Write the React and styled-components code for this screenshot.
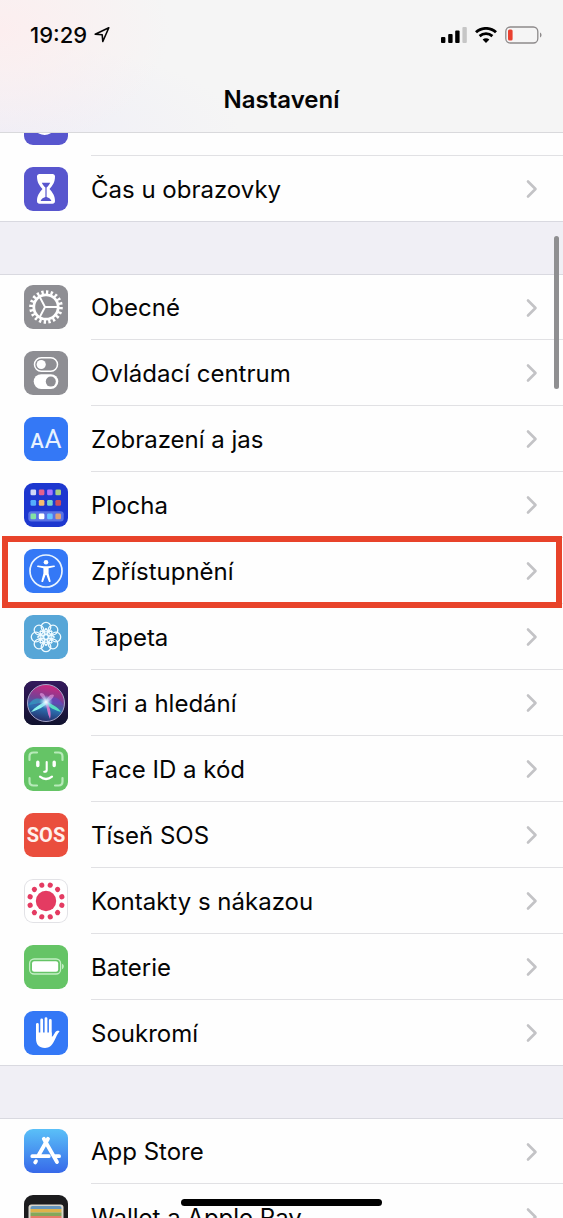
import React, { useLayoutEffect, useRef } from "react";
import styled, { createGlobalStyle } from "styled-components";

const GlobalStyle = createGlobalStyle`
  * {
    box-sizing: border-box;
  }
  body {
    margin: 0;
    background: #ffffff;
    color: #050505;
    font-family: Inter, Roboto, "Liberation Sans", sans-serif;
  }
`;

const Phone = styled.div`
  position: relative;
  display: flex;
  flex-direction: column;
  width: 100%;
  height: 100vh;
  overflow: hidden;
`;

const Header = styled.header`
  flex: none;
  padding-top: 20px;
  border-bottom: 1px solid #d9d9dc;
  background: radial-gradient(ellipse 170px 120px at 0 30px, #fceeef 0%, rgba(252, 238, 239, 0) 100%),
    radial-gradient(ellipse 240px 90px at 0 132px, #efeef7 0%, rgba(239, 238, 247, 0) 100%),
    #f5f5f5;
`;

const StatusBar = styled.div`
  display: flex;
  align-items: center;
  justify-content: space-between;
  height: 30px;
  padding: 0 21px 0 30px;
`;

const Clock = styled.div`
  display: flex;
  align-items: center;
  gap: 7px;
  font-size: 22px;
  font-weight: 500;
`;

const Signals = styled.div`
  display: flex;
  align-items: center;
  gap: 8px;
`;

const Title = styled.h1`
  margin: 34px 0 16px;
  font-size: 24px;
  line-height: 32px;
  font-weight: 600;
  text-align: center;
`;

const Scroller = styled.main`
  flex: 1;
  min-height: 0;
  overflow-y: auto;
  background: #f0eff5;
  scrollbar-width: none;
`;

const Group = styled.ul`
  margin: 0;
  padding: 0;
  list-style: none;
  background: #fefefe;

  & + & {
    margin-top: 52px;
  }
`;

const Item = styled.li`
  position: relative;
  height: 66px;

  &:first-child {
    border-top: 1px solid #d9d9e0;
  }
`;

const RowLink = styled.a`
  display: flex;
  align-items: center;
  gap: 23px;
  height: 100%;
  padding-left: 24px;
  color: inherit;
  text-decoration: none;
`;

const Tile = styled.svg`
  flex: none;
  width: 44px;
  height: 44px;
  margin-bottom: 1px;
  border-radius: 9px;
  background: ${(props) => props.$bg};
  box-shadow: ${(props) => (props.$outlined ? "inset 0 0 0 1px #e2e2e6" : "none")};
`;

const RowBody = styled.span`
  flex: 1;
  display: flex;
  align-items: center;
  justify-content: space-between;
  height: 100%;
  padding: 1px 25px 0 0;
  border-bottom: 1px solid #e1e1e4;

  ${Item}:last-child & {
    margin-left: -91px;
    padding-left: 91px;
    border-color: #d9d9e0;
  }
`;

const Label = styled.span`
  padding-top: 1px;
  font-size: 24px;
  line-height: 32px;
`;

const Highlight = styled.span`
  position: absolute;
  z-index: 1;
  top: -2px;
  bottom: -4px;
  left: 2px;
  right: 1px;
  border: 6px solid #e8432a;
  pointer-events: none;
`;

const ScrollThumb = styled.div`
  position: absolute;
  top: 236px;
  right: 4px;
  width: 5px;
  height: 153px;
  border-radius: 3px;
  background: #8f8f91;
`;

const HomeIndicator = styled.div`
  position: absolute;
  bottom: 12px;
  left: 50%;
  width: 201px;
  height: 7px;
  margin-left: -101px;
  border-radius: 4px;
  background: #000000;
`;

const Chevron = () => (
  <svg width="12" height="20" viewBox="0 0 12 20" fill="none" aria-hidden="true">
    <path d="M2 2.5 9.5 10 2 17.5" stroke="#c3c3c6" strokeWidth="2.6" strokeLinecap="round" strokeLinejoin="round" />
  </svg>
);

const LocationIcon = () => (
  <svg width="16" height="16" viewBox="0 0 16 16" fill="none" aria-hidden="true">
    <path d="M1.2 7.2 14.8 .8 8.8 14.5 8.2 7.8Z" stroke="#050505" strokeWidth="1.6" strokeLinejoin="round" />
  </svg>
);

const SignalIcon = () => (
  <svg width="26" height="16" viewBox="0 0 26 16" aria-hidden="true">
    <rect x="0" y="10" width="4.4" height="6" rx="1" />
    <rect x="7.2" y="7" width="4.4" height="9" rx="1" />
    <rect x="14.2" y="3.6" width="4.4" height="12.4" rx="1" />
    <rect x="21.4" y="0" width="4.4" height="16" rx="1" fill="#c6c6c6" />
  </svg>
);

const WifiIcon = () => (
  <svg width="22" height="16" viewBox="0 0 22 16" fill="none" aria-hidden="true">
    <path d="M1 5.3C6.6 .1 15.4 .1 21 5.3" stroke="#000" strokeWidth="2.9" />
    <path d="M4.6 9.1C8.3 5.8 13.7 5.8 17.4 9.1" stroke="#000" strokeWidth="2.8" />
    <path d="M7.6 12.4C9.6 10.7 12.4 10.7 14.4 12.4L11 16Z" fill="#000" />
  </svg>
);

const BatteryIcon = () => (
  <svg width="37" height="18" viewBox="0 0 37 18" fill="none" aria-hidden="true">
    <rect x="0.8" y="1" width="32" height="16" rx="4.5" stroke="#8d8a8b" strokeWidth="1.3" />
    <path d="M35 6.5c2 .8 2 4.2 0 5Z" fill="#8d8a8b" />
    <rect x="3" y="3.5" width="4.6" height="11" rx="1.5" fill="#e9402f" />
  </svg>
);

const Moon = () => <path d="M20 10a12 12 0 1 0 11 18 12 12 0 0 1-11-18Z" fill="#fff" />;

const Hourglass = () => (
  <g>
    <path
      d="M15.5 7h13c1.500 0 2.500 1 2.500 2.500 0 6-2.500 9-5.500 12.500 3 3.500 5.500 6.500 5.500 12 0 1.700-1 2.800-2.500 2.800h-13c-1.500 0-2.500-1.100-2.500-2.800 0-5.500 2.500-8.500 5.500-12C15.500 18.500 13 15.500 13 9.500 13 8 14 7 15.500 7Z"
      fill="#fff"
    />
    <path
      d="M17.800 15.800h8.400c-.8 2-2 3.200-3.600 4.800v9.400c2.500.8 4.200 2 4.800 4H16.600c.6-2 2.300-3.200 4.800-4v-9.400c-1.600-1.600-2.800-2.800-3.600-4.800Z"
      fill="#5856ce"
    />
  </g>
);

const Gear = () => (
  <g stroke="#fff" fill="none">
    <circle cx="22" cy="22" r="12.200" strokeWidth="2.800" />
    <circle cx="22" cy="22" r="14.900" strokeWidth="3.800" pathLength="40" strokeDasharray="1 1" />
    <path d="M21 22h14M21 22 15.500 11.500M21 22l-5.500 10.500" strokeWidth="1.900" />
  </g>
);

const Toggles = () => (
  <g>
    <rect x="10.500" y="6.800" width="23" height="13.400" rx="6.700" fill="none" stroke="#fff" strokeWidth="1.500" />
    <circle cx="17.200" cy="13.500" r="4.600" fill="#fff" />
    <rect x="9.700" y="23.200" width="24.600" height="14.800" rx="7.400" fill="#fff" />
    <circle cx="26.800" cy="30.600" r="5" fill="#8e8e93" />
  </g>
);

const LetterSizes = () => (
  <g fill="#e8f2ff" fontFamily="Roboto, sans-serif">
    <text x="6.500" y="31" fontSize="20" fontWeight="500">A</text>
    <text x="20.500" y="31" fontSize="26">A</text>
  </g>
);

const appColors = [
  ["#d0d7f7", "#e0608e", "#a874ff", "#a8cd84"],
  ["#54aefc", "#f5bd70", "#78d4cd", "#cd4f5d"],
  ["#83e2a4", "#ffffff", "#65c3ff", "#dfa077"],
];

const HomeScreen = () => (
  <g>
    <rect x="4.300" y="28.200" width="35.400" height="10.400" rx="3" fill="#5871e5" />
    {appColors.map((row, r) =>
      row.map((color, c) => (
        <rect key={color} x={6.5 + c * 8.3} y={[6.5, 17, 30.5][r]} width="5.600" height="5.800" rx="1.300" fill={color} />
      ))
    )}
  </g>
);

const Accessibility = () => (
  <g>
    <circle cx="22" cy="22" r="16" fill="none" stroke="#e8f4ff" strokeWidth="1.700" />
    <circle cx="22" cy="13.200" r="2.300" fill="#fff" />
    <path
      d="M14 16.400 20 17.200h4l6-.8c1.200-.1 1.400 1.300.2 1.600l-5.600 1.200v5.200l2 7.500c.3 1.200-1.300 1.700-1.800.5L22.400 26h-.8l-2.400 6.400c-.5 1.200-2.100.7-1.800-.5l2-7.500v-5.200L13.800 18c-1.200-.3-1-1.700.2-1.600Z"
      fill="#fff"
    />
  </g>
);

const petals = [0, 45, 90, 135, 180, 225, 270, 315];

const Flower = () => (
  <g fill="none" stroke="#eefaff" strokeWidth="1.300">
    <circle cx="22" cy="22" r="2.300" />
    {petals.map((angle) => (
      <g key={angle} transform={`rotate(${angle} 22 22)`}>
        <circle cx="22" cy="12.100" r="4.800" />
        <path d="M22 19.700c-2-1.600-2.600-3.200 0-6.200M22 19.700c2-1.600 2.600-3.200 0-6.200" />
      </g>
    ))}
  </g>
);

const Siri = () => (
  <g>
    <defs>
      <linearGradient id="siriBack" x1="0" y1="0" x2="0" y2="1">
        <stop offset="0" stopColor="#34195c" />
        <stop offset="1" stopColor="#10122e" />
      </linearGradient>
      <linearGradient id="siriOrb" x1=".6" y1="0" x2=".4" y2="1">
        <stop offset="0" stopColor="#d0267e" />
        <stop offset=".4" stopColor="#764095" />
        <stop offset=".65" stopColor="#2a6fb0" />
        <stop offset="1" stopColor="#252964" />
      </linearGradient>
      <radialGradient id="siriGlow">
        <stop offset="0" stopColor="#ffffff" />
        <stop offset=".35" stopColor="#c8edff" stopOpacity=".8" />
        <stop offset="1" stopColor="#79bdf5" stopOpacity="0" />
      </radialGradient>
    </defs>
    <rect width="44" height="44" fill="url(#siriBack)" />
    <circle cx="22" cy="22" r="18.500" fill="url(#siriOrb)" stroke="#a5a5c8" strokeWidth="1" />
    <path d="M22 21C15 15 8 17 5 24c6-1 11-2 17-3Z" fill="#2dacc9" opacity=".6" />
    <path d="M22 21c6-8 13-5 17 3-6 0-12-1-17-3Z" fill="#5e4bc8" opacity=".6" />
    <path d="M22 21C17 15 14 13 17 12c4 0 5 5 5 9 1-5 5-9 8-7-1 4-4 6-8 7Z" fill="#e39ce2" opacity=".65" />
    <path d="M22 20C17 23 11 26 7 31c7-2 13-5 16-9Z" fill="#8df4ed" />
    <path d="M22 20c5 3 12 6 15 11-6-2-12-4-15-9Z" fill="#57dcc1" />
    <path d="M21 20c2 6 2 12 5 18 2-7-1-13-3-18Z" fill="#d675cb" />
    <circle cx="22" cy="21" r="7" fill="url(#siriGlow)" />
  </g>
);

const Face = () => (
  <g fill="none" strokeLinecap="round">
    <path
      d="M5.500 13V9.500q0-4 4-4H13M31 5.500h3.500q4 0 4 4V13M38.500 31v3.500q0 4-4 4H31M13 38.500H9.500q-4 0-4-4V31"
      stroke="#b7eab9"
      strokeWidth="2.200"
    />
    <path d="M13.800 15.200v3.300M30.200 15.200v3.300" stroke="#fff" strokeWidth="3.400" />
    <path d="M22.700 15v8q0 1.800-2.500 1.800" stroke="#fff" strokeWidth="2.100" />
    <path d="M16 29.700q6 4.600 12 0" stroke="#fff" strokeWidth="2.200" />
  </g>
);

const Sos = () => (
  <text
    x="22"
    y="29"
    textAnchor="middle"
    fill="#fff1ec"
    fontFamily="Roboto, sans-serif"
    fontSize="20"
    fontWeight="700"
  >
    SOS
  </text>
);

const exposureDots = Array.from({ length: 12 }, (_, i) => 15 + i * 30);

const Exposure = () => (
  <g fill="#e43b62">
    <circle cx="22" cy="22" r="10.200" />
    {exposureDots.map((angle) => (
      <circle key={angle} cx="22" cy="5.600" r="2.600" transform={`rotate(${angle} 22 22)`} />
    ))}
  </g>
);

const BatteryFull = () => (
  <g>
    <rect x="5.600" y="14" width="31" height="15" rx="4.500" fill="none" stroke="#c4efc5" strokeWidth="1.300" />
    <rect x="8" y="16.300" width="26.200" height="10.400" rx="2.200" fill="#fff" />
    <path d="M38 18.800c2.400.7 2.400 4.700 0 5.400Z" fill="#c4efc5" />
  </g>
);

const Hand = () => (
  <g fill="none" stroke="#fff" strokeLinecap="round">
    <path d="M13.400 13.500V25M17.700 9V24M22 7.600V24M26.300 9.500V25" strokeWidth="2.800" />
    <path
      d="M12 21.500h15.700v4.300c1.800-.5 2.800-4.300 4.600-5.600 1.500-.9 3.200-.5 3.200.3-2 1.700-3.500 6-5.200 9.300-2.500 5-5 7.200-9.300 7.200-6 0-9-3.500-9-9.500Z"
      fill="#fff"
      stroke="none"
    />
  </g>
);

const AppStore = () => (
  <g fill="none" stroke="#fff" strokeWidth="3.800" strokeLinecap="round">
    <path d="M24 9.800 14.300 26.800M8.300 27.200h16.500M31.500 27.200h3.600" />
    <path d="M19.800 9.800 33 33M12 32.200l-.8 1.200" />
  </g>
);

const Wallet = () => (
  <g>
    <rect x="4.500" y="9.500" width="35" height="30" rx="3" fill="#d9d6cc" />
    <path d="M6.500 13a2 2 0 0 1 2-2h27a2 2 0 0 1 2 2v1h-31Z" fill="#6596bd" />
    <path d="M6.500 14h31v3.500h-31Z" fill="#dfb34a" />
    <path d="M6.500 17.500h31V21h-31Z" fill="#84a85a" />
    <path d="M6.500 21h31v12h-31Z" fill="#e77c69" />
    <path d="M4.500 23h11c2 4 11 4 13 0h11v14h-35Z" fill="#d9d6cc" />
  </g>
);

const groups = [
  [
    { label: "Nerušit", bg: "#5856ce", icon: Moon },
    { label: "Čas u obrazovky", bg: "#5856ce", icon: Hourglass },
  ],
  [
    { label: "Obecné", bg: "#8e8e93", icon: Gear },
    { label: "Ovládací centrum", bg: "#8e8e93", icon: Toggles },
    { label: "Zobrazení a jas", bg: "#3478f6", icon: LetterSizes },
    { label: "Plocha", bg: "#1d37cf", icon: HomeScreen },
    { label: "Zpřístupnění", bg: "#3478f6", icon: Accessibility, highlighted: true },
    { label: "Tapeta", bg: "#57a6d7", icon: Flower },
    { label: "Siri a hledání", bg: "#17152f", icon: Siri },
    { label: "Face ID a kód", bg: "#65c466", icon: Face },
    { label: "Tíseň SOS", bg: "#ea4e3d", icon: Sos },
    { label: "Kontakty s nákazou", bg: "#ffffff", icon: Exposure, outlined: true },
    { label: "Baterie", bg: "#65c466", icon: BatteryFull },
    { label: "Soukromí", bg: "#3478f6", icon: Hand },
  ],
  [
    { label: "App Store", bg: "linear-gradient(#5ac0f8, #3769e9)", icon: AppStore },
    { label: "Wallet a Apple Pay", bg: "#1c1c1e", icon: Wallet },
  ],
];

const SettingsRow = ({ label, bg, icon: Icon, highlighted, outlined }) => (
  <Item>
    <RowLink href="#">
      <Tile viewBox="0 0 44 44" $bg={bg} $outlined={outlined} aria-hidden="true">
        <Icon />
      </Tile>
      <RowBody>
        <Label>{label}</Label>
        <Chevron />
      </RowBody>
    </RowLink>
    {highlighted && <Highlight />}
  </Item>
);

const App = () => {
  const scroller = useRef(null);

  // open the list a little way down, under the title bar
  useLayoutEffect(() => {
    scroller.current.scrollTop = 43;
  }, []);

  return (
    <Phone>
      <GlobalStyle />
      <Header>
        <StatusBar>
          <Clock>
            19:29
            <LocationIcon />
          </Clock>
          <Signals>
            <SignalIcon />
            <WifiIcon />
            <BatteryIcon />
          </Signals>
        </StatusBar>
        <Title>Nastavení</Title>
      </Header>
      <Scroller ref={scroller}>
        {groups.map((rows) => (
          <Group key={rows[0].label}>
            {rows.map((row) => (
              <SettingsRow key={row.label} {...row} />
            ))}
          </Group>
        ))}
      </Scroller>
      <ScrollThumb />
      <HomeIndicator />
    </Phone>
  );
};

export default App;
